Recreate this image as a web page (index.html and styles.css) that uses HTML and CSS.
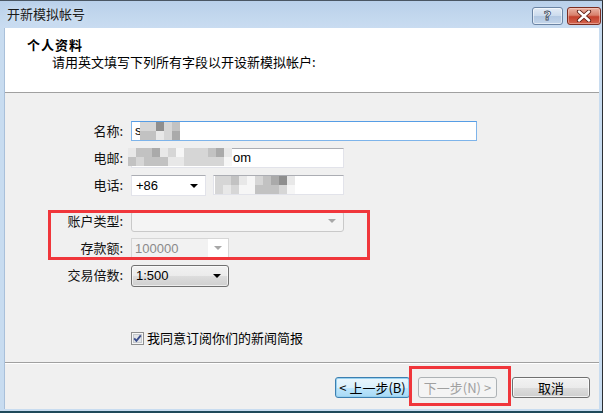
FILE: index.html
```html
<!DOCTYPE html>
<html lang="zh-CN">
<head>
<meta charset="utf-8">
<title>开新模拟帐号</title>
<link rel="stylesheet" href="styles.css">
</head>
<body>
<div class="window">
  <div class="titlebar">
    <span class="title">开新模拟帐号</span>
    <div class="tb-buttons">
      <div class="tb-btn help"><span class="q">?</span></div>
      <div class="tb-btn close">
        <svg width="16" height="12" viewBox="0 0 16 12">
          <path d="M3 1.5 L13 10.5 M13 1.5 L3 10.5" stroke="#5a1a12" stroke-width="4.2" stroke-linecap="round"/>
          <path d="M3 1.5 L13 10.5 M13 1.5 L3 10.5" stroke="#ffffff" stroke-width="2.4" stroke-linecap="round"/>
        </svg>
      </div>
    </div>
  </div>
  <div class="client">
    <div class="header">
      <div class="h-title">个人资料</div>
      <div class="h-sub">请用英文填写下列所有字段以开设新模拟帐户:</div>
    </div>
    <div class="body">
      <div class="form">
        <div class="lbl">名称:</div>
        <div class="row"><div class="field focus w-name"><span class="val">s</span><span class="mosaic mz-name"><i class="c2"></i><i class="c3"></i><i class="c2"></i><i class="c3"></i><i class="c5"></i><i class="c1"></i><i class="c2"></i><i class="c2"></i><i class="c3"></i><i class="c4"></i></span></div></div>

        <div class="lbl">电邮:</div>
        <div class="row"><div class="field w-mail"><span class="mosaic mz-mail"><i class="c1"></i><i class="c3"></i><i class="c3"></i><i class="c2"></i><i class="c3"></i><i class="c3"></i><i class="c4"></i><i class="c3"></i><i class="c1"></i><i class="c3"></i><i class="c2"></i><i class="c1"></i><i class="c0"></i><i class="c1"></i><i class="c2"></i><i class="c2"></i><i class="c2"></i><i class="c2"></i><i class="c2"></i><i class="c2"></i><i class="c3"></i><i class="c2"></i><i class="c4"></i><i class="c2"></i><i class="c1"></i><i class="c0"></i></span><span class="tail">om</span></div></div>

        <div class="lbl">电话:</div>
        <div class="row">
          <div class="select white w-code"><span class="sv">+86</span><span class="arrow"></span></div>
          <div class="field w-phone"><span class="mosaic mz-phone"><i class="c2"></i><i class="c2"></i><i class="c2"></i><i class="c1"></i><i class="c3"></i><i class="c2"></i><i class="c1"></i><i class="c0"></i><i class="c0"></i><i class="c0"></i><i class="c2"></i><i class="c3"></i><i class="c3"></i><i class="c3"></i><i class="c4"></i><i class="c3"></i><i class="c5"></i><i class="c2"></i><i class="c1"></i><i class="c0"></i></span></div>
        </div>

        <div class="lbl gap-top">账户类型:</div>
        <div class="row gap-top"><div class="select disabled w-acct"><span class="sv"></span><span class="arrow grey"></span></div></div>

        <div class="lbl">存款额:</div>
        <div class="row"><div class="combo disabled w-dep"><span class="cv">100000</span><span class="cbtn"><span class="arrow grey"></span></span></div></div>

        <div class="lbl">交易倍数:</div>
        <div class="row"><div class="select button w-lev"><span class="sv">1:500</span><span class="arrow"></span></div></div>
      </div>

      <div class="agree">
        <svg class="chk" width="13" height="13" viewBox="0 0 13 13">
          <rect x="0.5" y="0.5" width="12" height="12" fill="#f6f6f6" stroke="#8e8f8f"/>
          <rect x="2.5" y="2.5" width="8" height="8" fill="#e2e4e7" stroke="#c4c8cc"/>
          <path d="M3.2 6.4 L5.4 8.8 L9.8 3.4" fill="none" stroke="#3b4e8c" stroke-width="1.9"/>
        </svg>
        <span>我同意订阅你们的新闻简报</span>
      </div>
    </div>
    <div class="footer">
      <div class="btn focus b-back">&lt; 上一步(B)</div>
      <div class="btn disabled b-next">下一步(N) &gt;</div>
      <div class="btn b-cancel">取消</div>
    </div>
  </div>
  <div class="mark mark-a"></div>
  <div class="mark mark-b"></div>
</div>
</body>
</html>
```

FILE: styles.css
```css
* { box-sizing: border-box; }
html, body {
  margin: 0;
  padding: 0;
  background: #ffffff;
}
body {
  font-family: "Liberation Sans", "Noto Sans CJK SC", sans-serif;
  font-size: 13px;
  color: #000;
}
.window {
  position: relative;
  width: 603px;
  height: 413px;
  background: #c8dcf0;
  border-top: 1px solid #4a5663;
  border-right: 1px solid #2c2f33;
  border-bottom: 2px solid #1f4a5a;
  display: flex;
  flex-direction: column;
}
.titlebar {
  height: 27px;
  flex: none;
  display: flex;
  align-items: center;
  justify-content: space-between;
  padding: 0 1px 0 7px;
  background: linear-gradient(#b9d0ea, #c3d8ee 60%, #c9dcf1);
}
.title {
  font-family: "Noto Sans CJK SC", sans-serif;
  font-size: 13px;
  line-height: 16px;
  color: #1a1a1a;
  margin-top: -1px;
  text-shadow: 0 0 6px #e4eef9;
}
.tb-buttons {
  display: flex;
  gap: 4px;
  align-self: flex-start;
  margin-top: 6px;
}
.tb-btn {
  height: 18px;
  border-radius: 3px;
  display: flex;
  align-items: center;
  justify-content: center;
}
.help {
  width: 31px;
  border: 1px solid #6b84a4;
  background: linear-gradient(#e4ecf6, #ccdbed 48%, #b3c8e2 52%, #c3d5ea);
  box-shadow: inset 0 0 0 1px rgba(255,255,255,0.55);
}
.q {
  font-family: "DejaVu Sans", sans-serif;
  font-weight: bold;
  font-size: 13px;
  line-height: 14px;
  color: #ffffff;
  -webkit-text-stroke: 0.8px #3c4a5c;
}
.close {
  width: 34px;
  border: 1px solid #7a2c20;
  background: linear-gradient(#eab3a4, #d8806c 45%, #c4402c 55%, #d36550);
  box-shadow: inset 0 0 0 1px rgba(255,220,210,0.45);
}
.client {
  flex: none;
  height: 381px;
  margin: 0 3px 0 4px;
  background: #f0f0f0;
  border-left: 1px solid #a9c0da;
  display: flex;
  flex-direction: column;
  font-family: "Liberation Sans", "Noto Sans CJK SC", sans-serif;
}
.header {
  flex: none;
  height: 65px;
  background: #ffffff;
  border-bottom: 1px solid #a0a0a0;
  padding: 9px 0 0 22px;
}
.h-title {
  font-family: "Noto Sans CJK SC", sans-serif;
  font-weight: bold;
  font-size: 13px;
  line-height: 16px;
  letter-spacing: 1px;
}
.h-sub {
  font-family: "Noto Sans CJK SC", sans-serif;
  font-size: 13px;
  line-height: 16px;
  margin: 1px 0 0 25px;
}
.body {
  flex: none;
  height: 270px;
  border-bottom: 1px solid #a0a0a0;
  box-shadow: 0 1px 0 #ffffff;
  padding-top: 28px;
}
.form {
  display: grid;
  grid-template-columns: 87px auto;
  column-gap: 8px;
  row-gap: 7px;
  margin-left: 31px;
  justify-content: start;
}
.lbl {
  text-align: right;
  line-height: 20px;
  height: 20px;
  font-family: "Noto Sans CJK SC", sans-serif;
  color: #111;
}
.lbl.gap-top, .row.gap-top { margin-top: 9px; }
.row {
  display: flex;
  gap: 7px;
  height: 20px;
  align-items: center;
}
.field {
  position: relative;
  height: 20px;
  background: #ffffff;
  border: 1px solid #e2e3ea;
  border-top-color: #abadb3;
  display: flex;
  align-items: center;
  padding-left: 3px;
}
.field.focus {
  border-color: #7eb4ea;
  border-top-color: #569de5;
}
.w-name { width: 346px; }
.w-mail { width: 213px; }
.w-phone { width: 131px; }
.w-code { width: 75px; }
.w-acct { width: 213px; }
.w-dep { width: 98px; }
.w-lev { width: 98px; }
.val { line-height: 16px; }
.mosaic {
  position: absolute;
  display: grid;
  grid-auto-flow: column;
  grid-template-rows: 9px 9px;
  grid-auto-columns: 8px;
}
.mosaic i { display: block; }
.mosaic .c0 { background: #f6f6f6; }
.mosaic .c1 { background: #e8e8e8; }
.mosaic .c2 { background: #d6d6d6; }
.mosaic .c3 { background: #c2c2c2; }
.mosaic .c4 { background: #aaaaaa; }
.mosaic .c5 { background: #8e8e8e; }
.mz-name { left: 8px; top: 0; }
.mz-mail { left: -4px; top: -1px; }
.mz-phone { left: 1px; top: 0; }
.tail {
  position: absolute;
  left: 101px;
  top: 1px;
  line-height: 16px;
}
.select {
  position: relative;
  height: 20px;
  display: flex;
  align-items: center;
  justify-content: space-between;
  padding: 0 7px 0 4px;
}
.select.white {
  background: #ffffff;
  border: 1px solid #e2e3ea;
  border-top-color: #abadb3;
  height: 21px;
  margin-top: 1px;
}
.select.disabled {
  background: #f4f4f4;
  border: 1px solid #c9c9c9;
  border-radius: 3px;
  height: 21px;
}
.select.button {
  height: 22px;
  margin-top: 2px;
  border: 1px solid #707070;
  border-radius: 3px;
  background: linear-gradient(#f2f2f2, #ebebeb 50%, #dddddd 51%, #cfcfcf);
  box-shadow: inset 0 0 0 1px rgba(255,255,255,0.6);
}
.sv { line-height: 16px; }
.arrow {
  width: 0;
  height: 0;
  border-left: 4px solid transparent;
  border-right: 4px solid transparent;
  border-top: 4px solid #000;
}
.arrow.grey { border-top-color: #a8a8a8; }
.combo {
  height: 21px;
  display: flex;
  border: 1px solid #d6d6d6;
  background: #f7f7f7;
}
.cv {
  flex: 1;
  color: #8a8a8a;
  line-height: 19px;
  padding-left: 3px;
  background: #f2f2f2;
}
.cbtn {
  width: 20px;
  display: flex;
  align-items: center;
  justify-content: center;
  background: #ffffff;
}
.agree {
  display: flex;
  align-items: center;
  gap: 3px;
  margin: 45px 0 0 126px;
  height: 16px;
}
.agree span {
  font-family: "Noto Sans CJK SC", sans-serif;
  line-height: 16px;
}
.chk { flex: none; }
.footer {
  flex: 1;
  display: flex;
  justify-content: flex-end;
  align-items: flex-start;
  padding: 14px 9px 0 0;
}
.btn {
  height: 21px;
  border: 1px solid #707070;
  border-radius: 3px;
  background: linear-gradient(#f2f2f2, #ebebeb 50%, #dddddd 51%, #cfcfcf);
  box-shadow: inset 0 0 0 1px rgba(255,255,255,0.7);
  display: flex;
  align-items: center;
  justify-content: center;
  font-family: "Noto Sans CJK SC", sans-serif;
  font-size: 13px;
  line-height: 16px;
  white-space: nowrap;
}
.btn.focus {
  border-color: #3c7fb1;
  background: linear-gradient(#eaf6fd, #d9f0fc 50%, #bee6fd 51%, #a7d9f5);
  box-shadow: inset 0 0 0 1px #98d1ef;
}
.btn.disabled {
  border-color: #adb2b5;
  background: #f4f4f4;
  box-shadow: none;
  color: #a0a0a0;
}
.b-back { width: 75px; }
.b-next { width: 79px; margin-left: 8px; }
.b-cancel { width: 78px; margin-left: 15px; }
.mark {
  position: absolute;
  border: 3px solid #f0363b;
}
.mark-a {
  left: 48px;
  top: 209px;
  width: 322px;
  height: 50px;
}
.mark-b {
  left: 409px;
  top: 365px;
  width: 102px;
  height: 40px;
}
```
